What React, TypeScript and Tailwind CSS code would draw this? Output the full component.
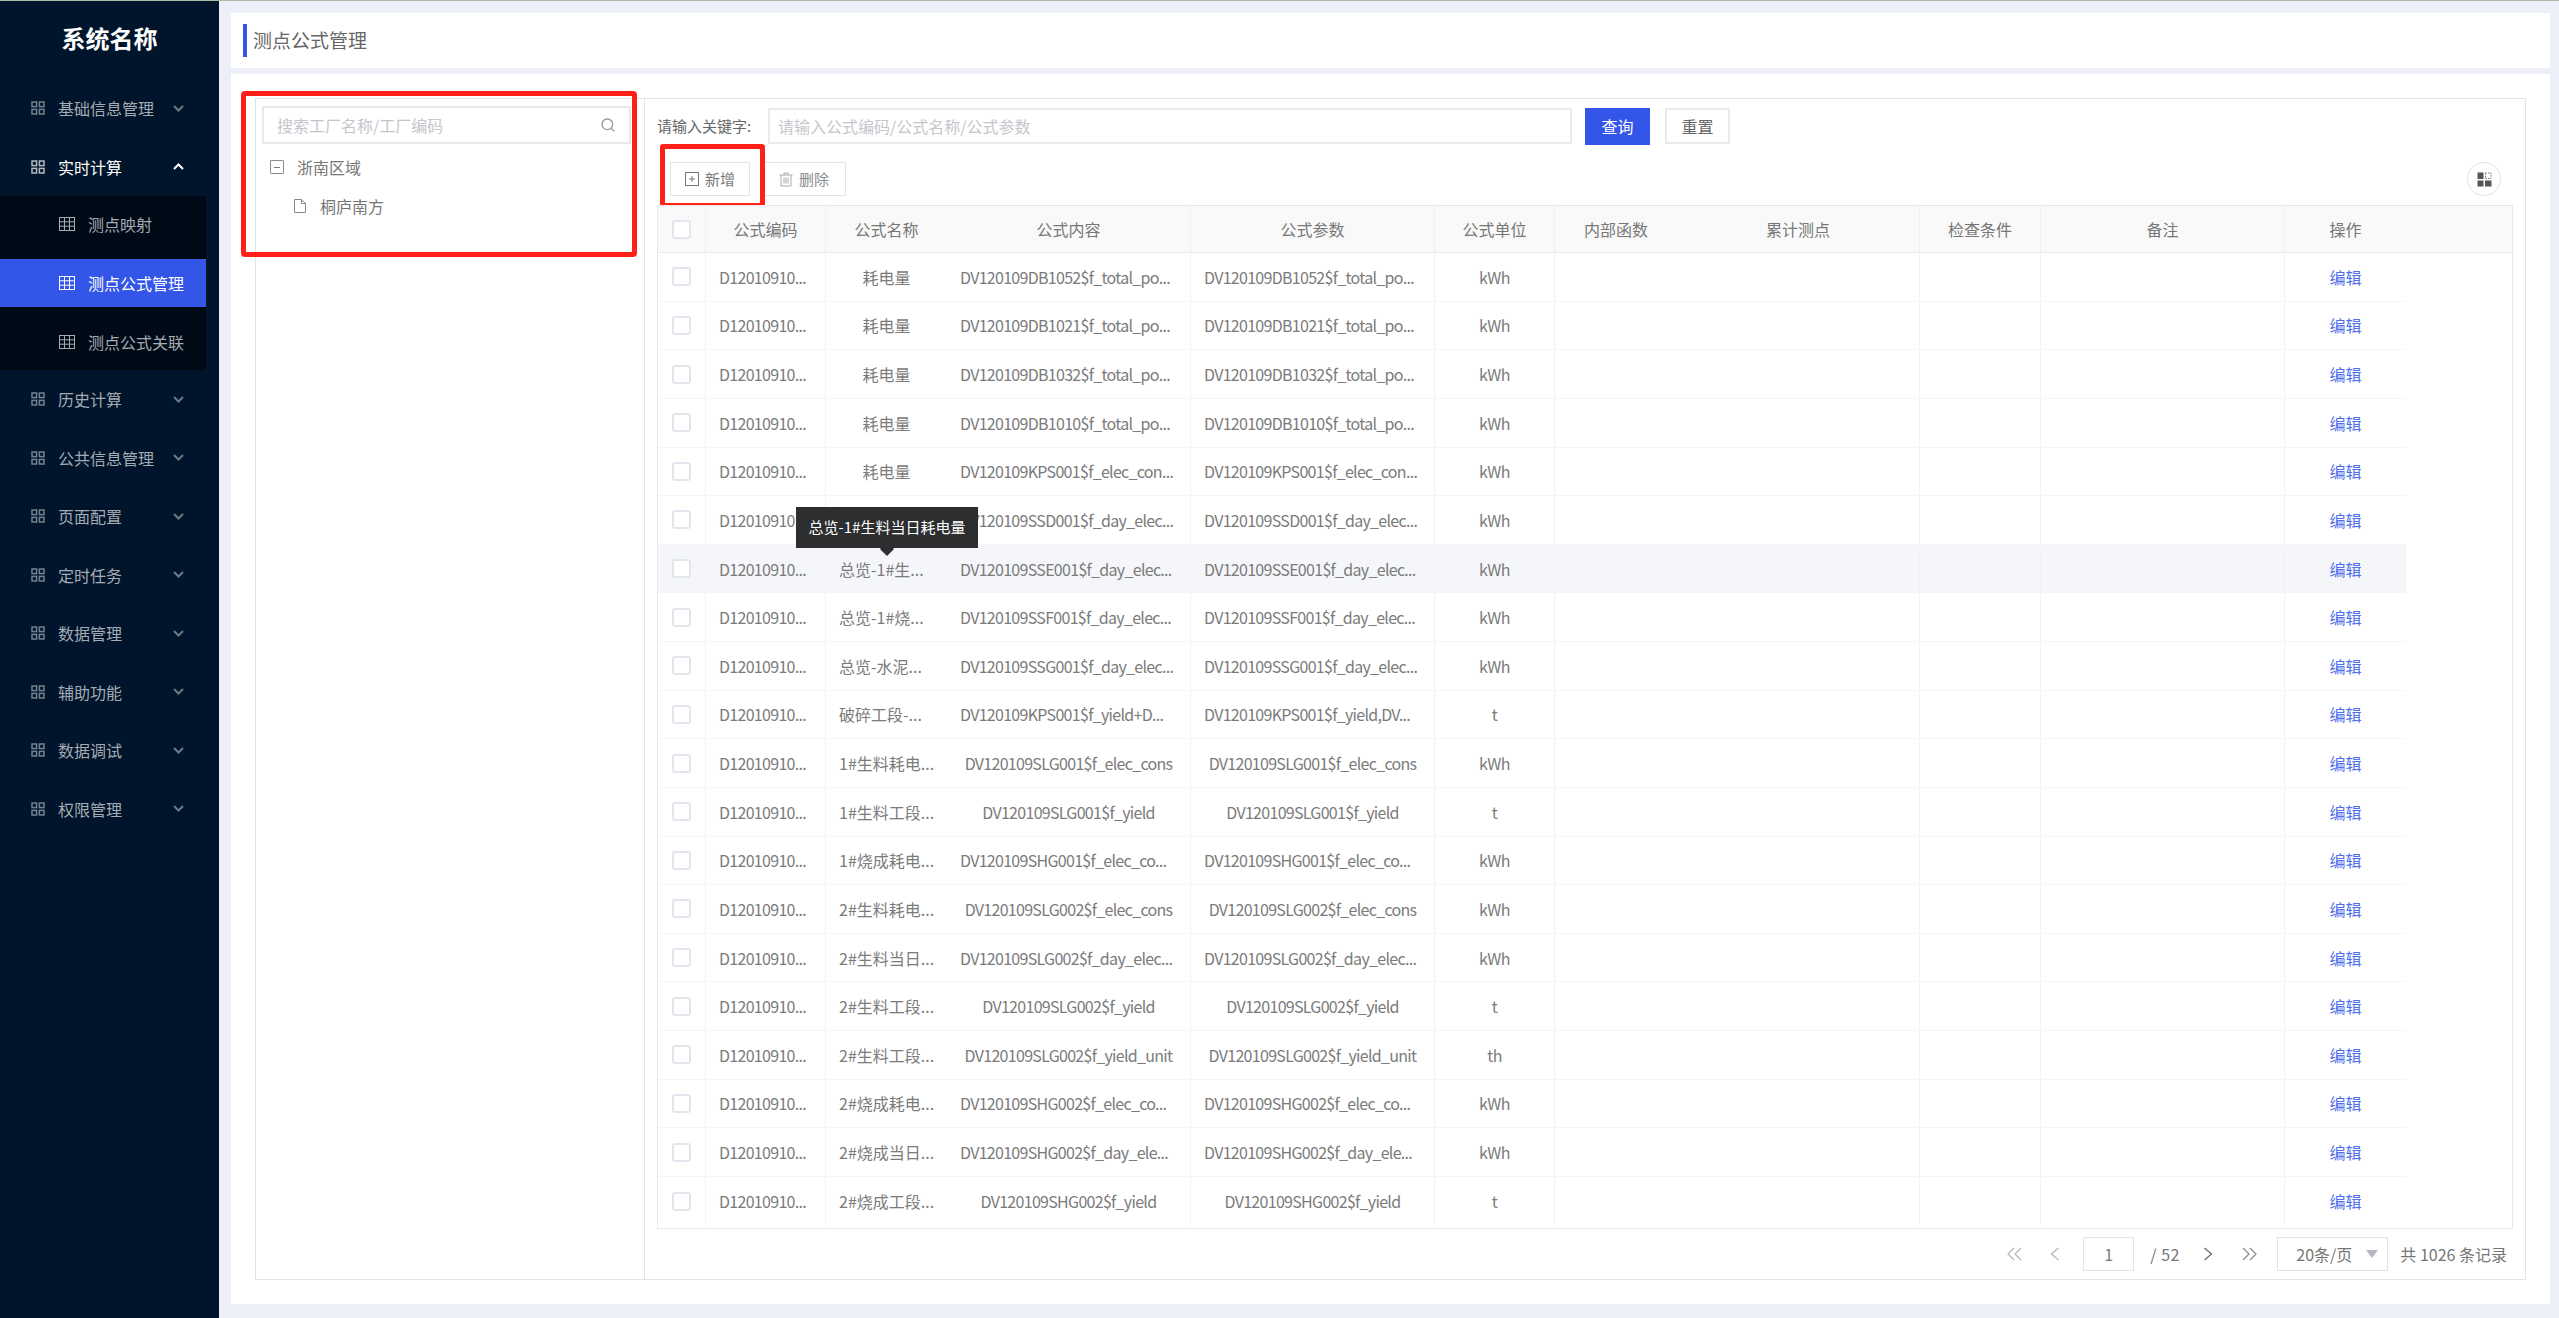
import { Search } from "lucide-react";

const rows = [
  ["D12010910...", "耗电量", "DV120109DB1052$f_total_po...", "DV120109DB1052$f_total_po...", "kWh"],
  ["D12010910...", "耗电量", "DV120109DB1021$f_total_po...", "DV120109DB1021$f_total_po...", "kWh"],
  ["D12010910...", "耗电量", "DV120109DB1032$f_total_po...", "DV120109DB1032$f_total_po...", "kWh"],
  ["D12010910...", "耗电量", "DV120109DB1010$f_total_po...", "DV120109DB1010$f_total_po...", "kWh"],
  ["D12010910...", "耗电量", "DV120109KPS001$f_elec_con...", "DV120109KPS001$f_elec_con...", "kWh"],
  ["D12010910...", "总览-1#生...", "DV120109SSD001$f_day_elec...", "DV120109SSD001$f_day_elec...", "kWh"],
  ["D12010910...", "总览-1#生...", "DV120109SSE001$f_day_elec...", "DV120109SSE001$f_day_elec...", "kWh"],
  ["D12010910...", "总览-1#烧...", "DV120109SSF001$f_day_elec...", "DV120109SSF001$f_day_elec...", "kWh"],
  ["D12010910...", "总览-水泥...", "DV120109SSG001$f_day_elec...", "DV120109SSG001$f_day_elec...", "kWh"],
  ["D12010910...", "破碎工段-...", "DV120109KPS001$f_yield+D...", "DV120109KPS001$f_yield,DV...", "t"],
  ["D12010910...", "1#生料耗电...", "DV120109SLG001$f_elec_cons", "DV120109SLG001$f_elec_cons", "kWh"],
  ["D12010910...", "1#生料工段...", "DV120109SLG001$f_yield", "DV120109SLG001$f_yield", "t"],
  ["D12010910...", "1#烧成耗电...", "DV120109SHG001$f_elec_co...", "DV120109SHG001$f_elec_co...", "kWh"],
  ["D12010910...", "2#生料耗电...", "DV120109SLG002$f_elec_cons", "DV120109SLG002$f_elec_cons", "kWh"],
  ["D12010910...", "2#生料当日...", "DV120109SLG002$f_day_elec...", "DV120109SLG002$f_day_elec...", "kWh"],
  ["D12010910...", "2#生料工段...", "DV120109SLG002$f_yield", "DV120109SLG002$f_yield", "t"],
  ["D12010910...", "2#生料工段...", "DV120109SLG002$f_yield_unit", "DV120109SLG002$f_yield_unit", "th"],
  ["D12010910...", "2#烧成耗电...", "DV120109SHG002$f_elec_co...", "DV120109SHG002$f_elec_co...", "kWh"],
  ["D12010910...", "2#烧成当日...", "DV120109SHG002$f_day_ele...", "DV120109SHG002$f_day_ele...", "kWh"],
  ["D12010910...", "2#烧成工段...", "DV120109SHG002$f_yield", "DV120109SHG002$f_yield", "t"],
];

const gridCols =
  "grid grid-cols-[48px_120px_121px_244px_244px_120px_122px_243px_121px_244px_121px]";

const MenuGridIcon = () => (
  <svg width="14" height="14" viewBox="0 0 14 14" fill="none" stroke="currentColor" strokeWidth="1.5" className="shrink-0">
    <rect x="1" y="1" width="4.6" height="4.6" />
    <rect x="8.4" y="1" width="4.6" height="4.6" />
    <rect x="1" y="8.4" width="4.6" height="4.6" />
    <rect x="8.4" y="8.4" width="4.6" height="4.6" />
  </svg>
);

const TableIcon = () => (
  <svg width="16" height="14" viewBox="0 0 16 14" fill="none" stroke="currentColor" strokeWidth="1" className="shrink-0">
    <rect x="0.5" y="0.5" width="15" height="13" />
    <path d="M0.5 4.8H15.5M0.5 9.2H15.5M5.5 0.5V13.5M10.5 0.5V13.5" />
  </svg>
);

const Chevron = ({ up }: { up?: boolean }) => (
  <svg width="11" height="7" viewBox="0 0 11 7" fill="none" stroke="currentColor" strokeWidth="2" className="shrink-0">
    <path d={up ? "M1 6L5.5 1.5L10 6" : "M1 1L5.5 5.5L10 1"} />
  </svg>
);

const PageArrow = ({ d, w, className }: { d: string; w: number; className: string }) => (
  <svg width={w} height="14" viewBox={`0 0 ${w} 14`} fill="none" stroke="currentColor" strokeWidth="1.2" className={`shrink-0 ${className}`}>
    <path d={d} />
  </svg>
);

const MenuItem = ({ label, open }: { label: string; open?: boolean }) => (
  <div className={`flex h-[58.5px] items-center pl-[31px] pr-[22px] ${open ? "text-white" : "text-[#a4abb3]"}`}>
    <span className={open ? "text-[#b4bac2]" : "text-[#77828f]"}>
      <MenuGridIcon />
    </span>
    <span className="ml-[13px] flex-1 text-base">{label}</span>
    <span className={open ? "text-white" : "text-[#6d7885]"}>
      <Chevron up={open} />
    </span>
  </div>
);

const SubItem = ({ label, active }: { label: string; active?: boolean }) => (
  <div className={`flex h-12 items-center pl-[59px] ${active ? "bg-[#3355e8] text-white" : "text-[#a4abb3]"}`}>
    <TableIcon />
    <span className="ml-[13px] text-base">{label}</span>
  </div>
);

const Sidebar = () => (
  <aside className="w-[219px] shrink-0 bg-[#00152b]">
    <div className="flex h-[78px] items-center justify-center pb-[4px] text-2xl font-bold text-white">系统名称</div>
    <nav className="w-[206px]">
      <MenuItem label="基础信息管理" />
      <MenuItem label="实时计算" open />
      <div className="flex flex-col gap-[11px] bg-[#000a17] pb-[4px] pt-[4px]">
        <SubItem label="测点映射" />
        <SubItem label="测点公式管理" active />
        <SubItem label="测点公式关联" />
      </div>
      {["历史计算", "公共信息管理", "页面配置", "定时任务", "数据管理", "辅助功能", "数据调试", "权限管理"].map((m) => (
        <MenuItem key={m} label={m} />
      ))}
    </nav>
  </aside>
);

const Checkbox = () => (
  <span className="block h-[19px] w-[19px] rounded-[3px] border-2 border-[#e3e6ed] bg-white" />
);

const TreePanel = () => (
  <div className="relative w-[389px] shrink-0 border-r border-[#e3e3e6] pl-[6px] pr-[13px] pt-[7px]">
    <div className="flex h-[38px] items-center justify-between border-2 border-[#e8e8ec] pl-[13px] pr-[13px] text-base text-[#c4c6cc]">
      <span>搜索工厂名称/工厂编码</span>
      <Search size={16} className="text-[#9a9a9a]" />
    </div>
    <div className="mt-[16px] flex h-[14px] items-center pl-[8px] text-base text-[#777]">
      <span className="flex h-[14px] w-[14px] items-center justify-center rounded-[1px] border border-[#8a8a8a]">
        <span className="h-px w-[6px] bg-[#777]" />
      </span>
      <span className="ml-[13px]">浙南区域</span>
    </div>
    <div className="mt-[25px] flex h-[14px] items-center pl-[32px] text-base text-[#777]">
      <svg width="12" height="14" viewBox="0 0 12 14" fill="none" stroke="#888" strokeWidth="1" className="shrink-0">
        <path d="M0.5 0.5H7.5L11.5 4.5V13.5H0.5ZM7.5 0.5V4.5H11.5" />
      </svg>
      <span className="ml-[14px]">桐庐南方</span>
    </div>
    <div className="absolute left-[-15px] top-[-8px] h-[166px] w-[396px] rounded-[4px] border-[5px] border-[#ff2018]" />
  </div>
);

const Toolbar = () => (
  <div className="mt-[9px] flex h-[36px] items-center text-base">
    <span className="w-[111px] text-[15px] text-[#666]">请输入关键字:</span>
    <div className="flex h-full w-[804px] items-center border-2 border-[#ebebef] pl-[8px] text-[#c4c6cc]">
      请输入公式编码/公式名称/公式参数
    </div>
    <button className="ml-[13px] h-[37px] w-[65px] bg-[#3355e8] text-white">查询</button>
    <button className="ml-[15px] h-full w-[65px] border-2 border-[#ebebef] text-[#666]">重置</button>
  </div>
);

const Actions = () => (
  <div className="mt-[18px] flex h-[34px] items-center text-[15px] text-[#777]">
    <div className="relative ml-[13px]">
      <button className="flex h-[34px] w-[80px] items-center justify-center gap-[6px] border border-[#e3e3e8]">
        <svg width="14" height="14" viewBox="0 0 14 14" fill="none" stroke="#777" strokeWidth="1">
          <rect x="0.5" y="0.5" width="13" height="13" />
          <path d="M4 7H10M7 4V10" />
        </svg>
        新增
      </button>
      <div className="absolute left-[-10px] top-[-18px] h-[64px] w-[105px] rounded-[3px] border-[5px] border-[#ff2018]" />
    </div>
    <button className="ml-[12px] flex h-[34px] w-[84px] items-center justify-center gap-[6px] border border-[#e3e3e8] text-[#8a8a8a]">
      <svg width="14" height="15" viewBox="0 0 14 15" fill="none" stroke="#aaa" strokeWidth="1">
        <path d="M0.5 3H13.5M5 3V1H9V3M2 3V14H12V3M5 5.5V11.5M7 5.5V11.5M9 5.5V11.5" />
      </svg>
      删除
    </button>
    <button className="ml-auto mr-[12px] flex h-[34px] w-[34px] items-center justify-center rounded-full border border-[#e3e3e8]">
      <svg width="15" height="15" viewBox="0 0 15 15" fill="#555">
        <rect x="0.5" y="0.5" width="6" height="6.5" />
        <rect x="8.5" y="1" width="5.5" height="5.5" fill="none" stroke="#777" strokeWidth="1" strokeDasharray="1.5 1" />
        <rect x="0.5" y="8.5" width="6" height="6" />
        <rect x="8" y="8.5" width="6.5" height="6" />
      </svg>
    </button>
  </div>
);

const headers = ["公式编码", "公式名称", "公式内容", "公式参数", "公式单位", "内部函数", "累计测点", "检查条件", "备注", "操作"];
const headerBorder = [true, false, true, true, true, false, true, true, true, false];

// truncated values start at the cell padding, short ones stay centred
const cellAlign = (text: string) =>
  text.endsWith("...") ? "justify-start pl-[13px]" : "justify-center";

const DataTable = () => (
  <div className="relative mt-[9px] h-[1024px] border border-[#e8e8ec] text-base">
    <div className="h-[47px] border-b border-[#ececee] bg-[#f9f9f9] text-[#777]">
      <div className={`${gridCols} h-full`}>
        <div className="flex items-center justify-center border-r border-[#f0f0f0] pr-[1px]">
          <Checkbox />
        </div>
        {headers.map((h, i) => (
          <div key={h} className={`flex items-center justify-center ${headerBorder[i] ? "border-r border-[#f0f0f0]" : ""}`}>
            {h}
          </div>
        ))}
      </div>
    </div>
    {rows.map((r, i) => (
      <div
        key={i}
        className={`${gridCols} h-[48.63px] w-[1748px] border-b border-[#f6f6f7] text-[#7b7b7b] ${i === 6 ? "bg-[#f5f6fa]" : ""} ${i === 19 ? "border-b-0" : ""}`}
      >
        <div className="flex items-center justify-center border-r border-[#f2f2f3] pr-[1px]">
          <Checkbox />
        </div>
        <div className={`flex items-center whitespace-nowrap border-r border-[#f2f2f3] tracking-[-0.7px] ${cellAlign(r[0])}`}>{r[0]}</div>
        <div className={`flex items-center whitespace-nowrap ${cellAlign(r[1])}`}>{r[1]}</div>
        <div className={`flex items-center whitespace-nowrap border-r border-[#f2f2f3] tracking-[-0.7px] ${cellAlign(r[2])}`}>{r[2]}</div>
        <div className={`flex items-center whitespace-nowrap border-r border-[#f2f2f3] tracking-[-0.7px] ${cellAlign(r[3])}`}>{r[3]}</div>
        <div className="flex items-center justify-center border-r border-[#f2f2f3] tracking-[-0.5px]">{r[4]}</div>
        <div />
        <div className="border-r border-[#f2f2f3]" />
        <div className="border-r border-[#f2f2f3]" />
        <div className="border-r border-[#f2f2f3]" />
        <div className="flex items-center justify-center text-[#4f6fee]">编辑</div>
      </div>
    ))}
    <div className="absolute left-[138px] top-[301px] flex h-[41px] w-[182px] items-center justify-center bg-[#2d2e30] text-[15px] text-white">
      总览-1#生料当日耗电量
      <span className="absolute left-[86px] top-[37px] h-[10px] w-[10px] rotate-45 bg-[#2d2e30]" />
    </div>
  </div>
);

const Pagination = () => (
  <div className="flex h-[50px] items-center justify-end pr-[6px] text-base text-[#777]">
    <PageArrow w={16} d="M8 1L2 7L8 13M15 1L9 7L15 13" className="text-[#b5b5b5]" />
    <PageArrow w={10} d="M8.5 1L1.5 7L8.5 13" className="ml-[28px] text-[#b5b5b5]" />
    <span className="ml-[23px] flex h-[34px] w-[51px] items-center justify-center border border-[#e3e3e8]">1</span>
    <span className="ml-[16px] w-[26px] whitespace-nowrap tracking-[0.5px]">/ 52</span>
    <PageArrow w={10} d="M1.5 1L8.5 7L1.5 13" className="ml-[27px] text-[#666]" />
    <PageArrow w={16} d="M1 1L7 7L1 13M8 1L14 7L8 13" className="ml-[29px] text-[#888]" />
    <div className="ml-[19px] flex h-[34px] w-[111px] items-center justify-between border border-[#e3e3e8] pl-[18px] pr-[9px]">
      <span>20条/页</span>
      <span className="h-0 w-0 border-x-[6px] border-t-[8px] border-x-transparent border-t-[#b4b8c2]" />
    </div>
    <span className="ml-[12px]">共 1026 条记录</span>
  </div>
);

export default function App() {
  return (
    <div className="flex h-[1318px] border-t border-[#a7bba5] bg-[#eceff8] font-['Noto_Sans_CJK_SC',sans-serif]">
      <Sidebar />
      <main className="min-w-0 flex-1 pl-3 pr-[9px] pt-3">
        <div className="flex h-[55px] items-center bg-white pl-3">
          <span className="h-[33px] w-1 bg-[#3355e8]" />
          <span className="ml-[6px] text-[19px] text-[#666]">测点公式管理</span>
        </div>
        <div className="mt-[6px] h-[1230px] bg-white px-6 pt-6">
          <div className="flex h-[1182px] border border-[#e3e3e6]">
            <TreePanel />
            <div className="min-w-0 flex-1 px-3">
              <Toolbar />
              <Actions />
              <DataTable />
              <Pagination />
            </div>
          </div>
        </div>
      </main>
    </div>
  );
}
